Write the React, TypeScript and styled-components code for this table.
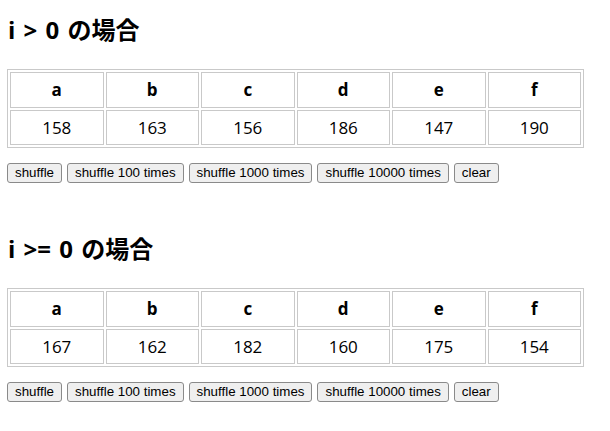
import React from "react";
import styled, { createGlobalStyle } from "styled-components";

const GlobalStyle = createGlobalStyle`
  html, body { margin: 0; padding: 0; background: #ffffff; }
  body { font-family: "Open Sans", "Noto Sans CJK JP", sans-serif; color: #000; }
`;

const Page = styled.div`
  padding: 15px 7px 0 7px;
  display: flex;
  flex-direction: column;
  gap: 51px;
`;

const Section = styled.section`
  display: flex;
  flex-direction: column;
`;

const Heading = styled.h2`
  margin: 0 0 24px 1px;
  font-family: "Open Sans", "Noto Sans CJK JP", sans-serif;
  font-size: 24px;
  font-weight: 700;
  line-height: 30px;
  word-spacing: 2px;
`;

const Table = styled.table`
  width: 577px;
  table-layout: fixed;
  border: 1px solid #c9c9c9;
  border-spacing: 2px;
`;

const HeadCell = styled.th`
  border: 1px solid #c9c9c9;
  padding: 0;
  height: 34px;
  line-height: 34px;
  font-family: "Open Sans", "Noto Sans CJK JP", sans-serif;
  font-size: 17px;
  font-weight: 700;
  text-align: center;
`;

const Cell = styled.td`
  border: 1px solid #c9c9c9;
  padding: 0;
  height: 33px;
  line-height: 33px;
  font-family: "Open Sans", "Noto Sans CJK JP", sans-serif;
  font-size: 17px;
  font-weight: 400;
  text-align: center;
`;

const Controls = styled.div`
  display: flex;
  gap: 5px;
  margin-top: 15px;
`;

const Button = styled.button`
  font-family: "Liberation Sans", Arial, sans-serif;
  font-size: 13.33px;
  height: 20px;
  padding: 0 7px;
  line-height: 18px;
  border: 1px solid #8a8a8a;
  border-radius: 3px;
  background: #efefef;
  color: #000;
`;

const labels = ["a", "b", "c", "d", "e", "f"];
const sections = [
  { title: "i > 0 の場合", values: [158, 163, 156, 186, 147, 190] },
  { title: "i >= 0 の場合", values: [167, 162, 182, 160, 175, 154] },
];
const buttons = ["shuffle", "shuffle 100 times", "shuffle 1000 times", "shuffle 10000 times", "clear"];

export default function App() {
  return (
    <>
      <GlobalStyle />
      <Page>
        {sections.map((s) => (
          <Section key={s.title}>
            <Heading>{s.title}</Heading>
            <Table>
              <thead>
                <tr>
                  {labels.map((l) => (
                    <HeadCell key={l}>{l}</HeadCell>
                  ))}
                </tr>
              </thead>
              <tbody>
                <tr>
                  {s.values.map((v, i) => (
                    <Cell key={i}>{v}</Cell>
                  ))}
                </tr>
              </tbody>
            </Table>
            <Controls>
              {buttons.map((b) => (
                <Button key={b}>{b}</Button>
              ))}
            </Controls>
          </Section>
        ))}
      </Page>
    </>
  );
}
